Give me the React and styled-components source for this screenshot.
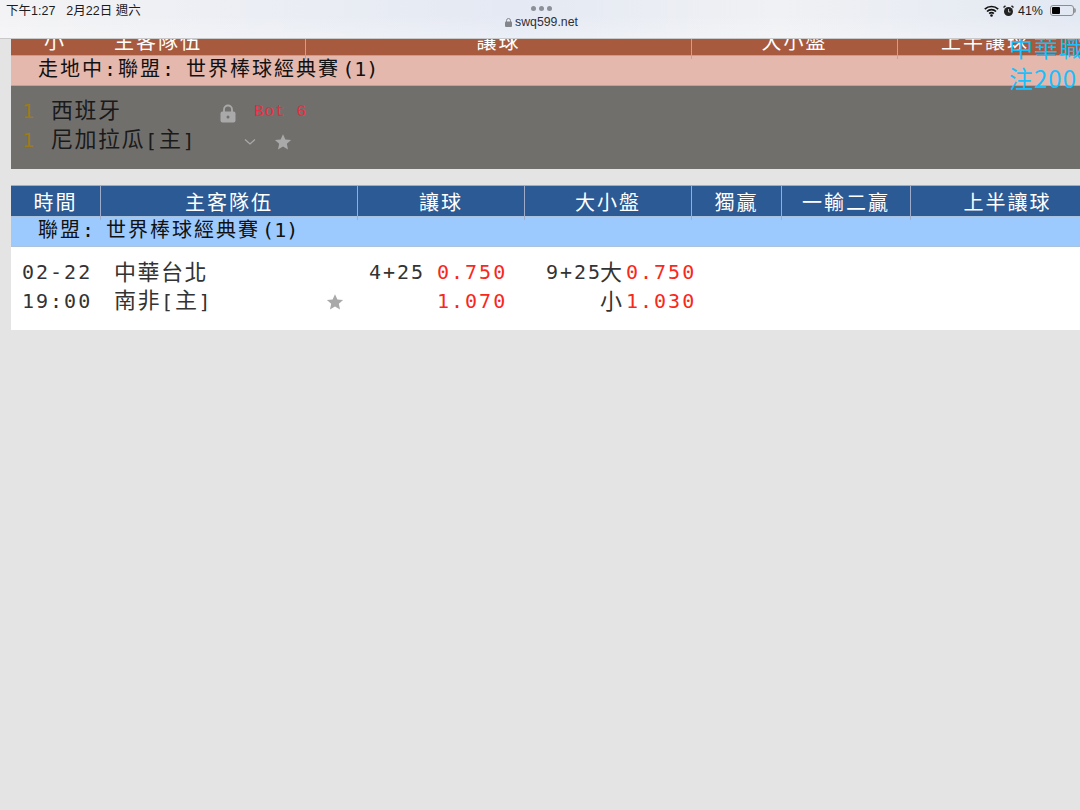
import styled, { createGlobalStyle } from "styled-components"

const GlobalStyle = createGlobalStyle`
  html, body {
    margin: 0;
    background: #e4e4e4;
  }
`
const Page = styled.div`
  height: 810px;
  display: flex;
  flex-direction: column;
  overflow: hidden;
`
const BrowserBar = styled.header`
  height: 39px;
  flex: none;
  box-sizing: border-box;
  display: grid;
  grid-template-columns: 1fr auto 1fr;
  padding: 3px 3px 0 6px;
  background: linear-gradient(180deg, rgba(255, 255, 255, 0) 40%, rgba(255, 255, 255, 0.25) 100%),
    linear-gradient(90deg, #f3f3f5 0%, #e4e9f3 48%, #f0f1f4 72%, #e2e8f2 100%);
  border-bottom: 1px solid #c9c9c9;
  font-family: "Liberation Sans", "Noto Sans CJK TC", sans-serif;
  font-size: 12.5px;
  color: #1c1c1e;
`
const StatusLeft = styled.div`
  display: flex;
  gap: 11px;
  padding-top: 1px;
  line-height: 14px;
`
const StatusRight = styled.div`
  display: flex;
  justify-content: flex-end;
  align-items: flex-start;
  gap: 4px;
  padding-top: 1px;
  line-height: 14px;
`
const AddressBox = styled.div`
  display: flex;
  flex-direction: column;
  align-items: center;
  gap: 4px;
  padding-top: 3px;
`
const Dots = styled.div`
  display: flex;
  gap: 3px;
`
const Dot = styled.span`
  width: 5px;
  height: 5px;
  border-radius: 50%;
  background: #8e9098;
`
const Address = styled.div`
  display: flex;
  align-items: center;
  gap: 3px;
  font-size: 12.3px;
  line-height: 14px;
  color: #303034;
`
const Battery = styled.span`
  width: 24px;
  height: 11px;
  box-sizing: border-box;
  margin: 1px 3px 0 3px;
  padding: 1px;
  border: 1px solid #8d8d90;
  border-radius: 3px;
  position: relative;
  &::before {
    content: "";
    display: block;
    width: 8px;
    height: 7px;
    border-radius: 1px;
    background: #000;
  }
  &::after {
    content: "";
    position: absolute;
    right: -3px;
    top: 2px;
    width: 2px;
    height: 5px;
    border-radius: 0 2px 2px 0;
    background: #9c9c9f;
  }
`
const Scroller = styled.main`
  flex: 1;
  position: relative;
  overflow: hidden;
  padding-left: 11px;
  font-family: "DejaVu Sans Mono", "Noto Sans CJK TC", monospace;
  font-size: 20px;
  letter-spacing: 2px;
  color: #333;
`
const Board = styled.section`
  margin-top: ${p => p.$top || 0}px;
  width: 1069px;
`
const HeadRow = styled.div`
  height: 30px;
  display: grid;
  grid-template-columns: ${p => p.$cols};
  background: ${p => p.$bg};
  border-top: 1px solid ${p => p.$line};
  color: #fff;
  position: relative;
`
const HeadCell = styled.div`
  text-align: center;
  line-height: 34px;
  white-space: nowrap;
  border-left: ${p => (p.$first ? "none" : "1px solid " + p.$line)};
`
const CutLabel = styled.span`
  position: absolute;
  left: 33px;
  top: 0;
  line-height: 34px;
`
const LeagueRow = styled.div`
  height: 31px;
  box-sizing: border-box;
  padding-left: 27px;
  line-height: 27px;
  white-space: nowrap;
  word-spacing: -4px;
  color: #111;
  background: ${p => p.$bg};
  border-top: 1px solid ${p => p.$line};
  border-bottom: 1px solid ${p => p.$line};
`
const Count = styled.span`
  letter-spacing: 0;
  padding-left: 2px;
`
const LiveBody = styled.div`
  height: 83px;
  box-sizing: border-box;
  padding-top: 11px;
  background: #716f6c;
  color: #1a1a1a;
`
const LiveLine = styled.div`
  display: grid;
  grid-template-columns: 29px 168px 35px 1fr;
  grid-template-rows: 29px;
  align-items: center;
  padding-left: 11px;
  line-height: 29px;
  white-space: nowrap;
`
const Rank = styled.span`
  color: #9b7b1c;
`
const Cjk = styled.span`
  font-size: 22px;
  letter-spacing: 1.5px;
  vertical-align: 1px;
`
const IconSlot = styled.span`
  display: flex;
  justify-content: ${p => (p.$end ? "flex-end" : "flex-start")};
  align-items: center;
  padding-left: ${p => p.$pad || 0}px;
  margin-top: ${p => p.$drop || 0}px;
  margin-right: ${p => p.$pull || 0}px;
`
const Period = styled.span`
  font-family: "Liberation Mono", monospace;
  font-size: 16px;
  letter-spacing: 1px;
  margin-top: 2px;
  color: #e62e42;
`
const MatchBody = styled.div`
  height: 83px;
  box-sizing: border-box;
  padding-top: 11px;
  display: grid;
  grid-template-columns: 89px 257px 167px 167px 1fr;
  align-content: start;
  background: #fff;
`
const Stack = styled.div`
  display: flex;
  flex-direction: column;
  padding-left: ${p => p.$pad || 0}px;
`
const TextLine = styled.div`
  height: 29px;
  line-height: 29px;
  white-space: nowrap;
`
const TeamLine = styled(TextLine)`
  display: flex;
  justify-content: space-between;
  align-items: center;
  padding-right: 13px;
`
const OddsGrid = styled.div`
  display: grid;
  grid-template-columns: ${p => p.$cols};
  grid-auto-rows: 29px;
  line-height: 29px;
  padding-left: ${p => p.$pad}px;
  white-space: nowrap;
`
const Odds = styled.span`
  color: #f8281c;
`
const FloatNote = styled.div`
  position: absolute;
  left: 1009px;
  top: -8px;
  font-family: "Noto Sans CJK TC", sans-serif;
  font-size: 24px;
  line-height: 31px;
  letter-spacing: 1px;
  white-space: nowrap;
  color: #18c0ff;
`

const Star = () => (
  <svg width="18" height="18" viewBox="0 0 24 24" fill="#a9a9a9">
    <path d="M12 1.5l3.2 7 7.6.8-5.7 5.1 1.6 7.5L12 18.1l-6.7 3.8 1.6-7.5L1.200 9.300l7.600-.8z" />
  </svg>
)
const Lock = () => (
  <svg width="16" height="19" viewBox="0 0 16 19">
    <path d="M4 8V5.500a4 4 0 0 1 8 0V8" fill="none" stroke="#a9a9a9" strokeWidth="1.800" />
    <rect x="0.500" y="7.500" width="15" height="11" rx="2" fill="#a9a9a9" />
    <circle cx="8" cy="13" r="1.500" fill="#716f6c" />
  </svg>
)
const Chevron = () => (
  <svg width="12" height="8" viewBox="0 0 12 8">
    <path d="M1 1.500l5 4.500 5-4.500" fill="none" stroke="#a9a9a9" strokeWidth="1.300" />
  </svg>
)
const Wifi = () => (
  <svg width="15" height="12" viewBox="0 0 15 12" style={{ marginTop: 1 }}>
    <path d="M.800 4.200a9.600 9.600 0 0 1 13.400 0M3 6.500a6.400 6.400 0 0 1 9 0M5.200 8.700a3.200 3.200 0 0 1 4.600 0" fill="none" stroke="#111" strokeWidth="1.700" />
    <circle cx="7.500" cy="10.500" r="1.300" fill="#111" />
  </svg>
)
const Alarm = () => (
  <svg width="11" height="12" viewBox="0 0 11 12" style={{ marginTop: 1 }}>
    <circle cx="5.500" cy="6.500" r="4.500" fill="#222" />
    <path d="M.500 2.500L2.500.700M10.500 2.500L8.500.700" stroke="#222" strokeWidth="1.500" />
    <path d="M5.500 4v3h2" fill="none" stroke="#ddd" strokeWidth=".8" />
  </svg>
)
const SmallLock = () => (
  <svg width="7" height="9" viewBox="0 0 7 9">
    <path d="M1.500 4V2.500a2 2 0 0 1 4 0V4" fill="none" stroke="#85868c" />
    <rect y="3.500" width="7" height="5.500" rx="1" fill="#85868c" />
  </svg>
)

const liveCols = "294px 386px 206px 175px"
const matchCols = "89px 257px 167px 167px 90px 129px 194px"
const matchHeads = ["時間", "主客隊伍", "讓球", "大小盤", "獨贏", "一輸二贏", "上半讓球"]

const App = () => {
  return (
    <Page>
      <GlobalStyle />
      <BrowserBar>
        <StatusLeft>
          <span>下午1:27</span>
          <span>2月22日 週六</span>
        </StatusLeft>
        <AddressBox>
          <Dots><Dot /><Dot /><Dot /></Dots>
          <Address><SmallLock />swq599.net</Address>
        </AddressBox>
        <StatusRight>
          <Wifi />
          <Alarm />
          <span>41%</span>
          <Battery />
        </StatusRight>
      </BrowserBar>

      <Scroller>
        <Board $top={-15}>
          <HeadRow $cols={liveCols} $bg="#a85a3f" $line="#b9a2b4">
            <CutLabel>小</CutLabel>
            <HeadCell $first $line="#b9a2b4">主客隊伍</HeadCell>
            <HeadCell $line="#b9a2b4">讓球</HeadCell>
            <HeadCell $line="#b9a2b4">大小盤</HeadCell>
            <HeadCell $line="#b9a2b4">上半讓球</HeadCell>
          </HeadRow>
          <LeagueRow $bg="#e5b8ad" $line="#b5a49c">走地中:聯盟: 世界棒球經典賽<Count>(1)</Count></LeagueRow>
          <LiveBody>
            <LiveLine>
              <Rank>1</Rank>
              <span><Cjk>西班牙</Cjk></span>
              <IconSlot $pad={1} $drop={4}><Lock /></IconSlot>
              <Period>Bot 6</Period>
            </LiveLine>
            <LiveLine>
              <Rank>1</Rank>
              <span><Cjk>尼加拉瓜</Cjk>[<Cjk>主</Cjk>]</span>
              <IconSlot $end $drop={3} $pull={-2}><Chevron /></IconSlot>
              <IconSlot $pad={20} $drop={3}><Star /></IconSlot>
            </LiveLine>
          </LiveBody>
        </Board>

        <Board $top={16}>
          <HeadRow $cols={matchCols} $bg="#2c5a94" $line="#9eaccc">
            {matchHeads.map((h, i) => (
              <HeadCell key={h} $first={i === 0} $line="#9eaccc">{h}</HeadCell>
            ))}
          </HeadRow>
          <LeagueRow $bg="#9ccaff" $line="#a9c2de">聯盟: 世界棒球經典賽<Count>(1)</Count></LeagueRow>
          <MatchBody>
            <Stack $pad={11}>
              <TextLine>02-22</TextLine>
              <TextLine>19:00</TextLine>
            </Stack>
            <Stack $pad={14}>
              <TeamLine><Cjk>中華台北</Cjk></TeamLine>
              <TeamLine><span><Cjk>南非</Cjk>[<Cjk>主</Cjk>]</span><Star /></TeamLine>
            </Stack>
            <OddsGrid $cols="68px auto" $pad={12}>
              <span>4+25</span><Odds>0.750</Odds>
              <span /><Odds>1.070</Odds>
            </OddsGrid>
            <OddsGrid $cols="54px 26px auto" $pad={22}>
              <span>9+25</span><Cjk>大</Cjk><Odds>0.750</Odds>
              <span /><Cjk>小</Cjk><Odds>1.030</Odds>
            </OddsGrid>
          </MatchBody>
        </Board>

        <FloatNote>中華職<br />注200</FloatNote>
      </Scroller>
    </Page>
  )
}

export default App
